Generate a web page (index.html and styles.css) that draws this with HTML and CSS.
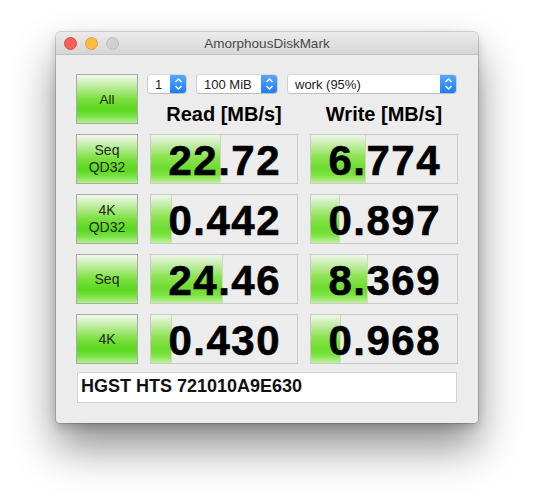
FILE: index.html
```
<!DOCTYPE html>
<html lang="en">
<head>
    <meta charset="UTF-8">
    <title>AmorphousDiskMark</title>
    <link rel="stylesheet" href="styles.css">
</head>
<body>
    <div class="window">
        <div class="titlebar">
            <div class="lights">
                <span class="light red"></span>
                <span class="light yellow"></span>
                <span class="light gray"></span>
            </div>
            <div class="title">AmorphousDiskMark</div>
        </div>
        <div class="contents">
            <div class="btn-test all">All</div>
            <div class="top">
                <div class="combos">
                    <div class="combo c-count"><span class="val">1</span><span class="arrows"><svg width="9" height="14" viewBox="0 0 9 14"><path d="M1.5 5 L4.5 2 L7.5 5 M1.5 9 L4.5 12 L7.5 9" fill="none" stroke="#fff" stroke-width="1.4"/></svg></span></div>
                    <div class="combo c-size"><span class="val">100 MiB</span><span class="arrows"><svg width="9" height="14" viewBox="0 0 9 14"><path d="M1.5 5 L4.5 2 L7.5 5 M1.5 9 L4.5 12 L7.5 9" fill="none" stroke="#fff" stroke-width="1.4"/></svg></span></div>
                    <div class="combo c-drive"><span class="val">work (95%)</span><span class="arrows"><svg width="9" height="14" viewBox="0 0 9 14"><path d="M1.5 5 L4.5 2 L7.5 5 M1.5 9 L4.5 12 L7.5 9" fill="none" stroke="#fff" stroke-width="1.4"/></svg></span></div>
                </div>
                <div class="heads">
                    <div class="head">Read [MB/s]</div>
                    <div class="head">Write [MB/s]</div>
                </div>
            </div>

            <div class="btn-test">Seq<br>QD32</div>
            <div class="result"><span class="bar" style="width:47%"></span><span class="num">22.72</span></div>
            <div class="result"><span class="bar" style="width:37%"></span><span class="num">6.774</span></div>

            <div class="btn-test">4K<br>QD32</div>
            <div class="result"><span class="bar" style="width:13.5%"></span><span class="num">0.442</span></div>
            <div class="result"><span class="bar" style="width:19.5%"></span><span class="num">0.897</span></div>

            <div class="btn-test">Seq</div>
            <div class="result"><span class="bar" style="width:48.5%"></span><span class="num">24.46</span></div>
            <div class="result"><span class="bar" style="width:38.5%"></span><span class="num">8.369</span></div>

            <div class="btn-test">4K</div>
            <div class="result"><span class="bar" style="width:13.5%"></span><span class="num">0.430</span></div>
            <div class="result"><span class="bar" style="width:20%"></span><span class="num">0.968</span></div>

            <div class="name">HGST HTS 721010A9E630</div>
        </div>
    </div>
</body>
</html>
```

FILE: styles.css
```
body{
    margin: 0;
    padding: 32px 0 81px 56px;
    background: #ffffff;
    font-family: "Liberation Sans", Arial, sans-serif;
}
.window{
    width: 422px;
    background: #ececec;
    border-radius: 5px 5px 4px 4px;
    box-shadow: 0 0 0 1px rgba(0,0,0,0.14), 0 4px 10px rgba(0,0,0,0.18), 0 24px 44px rgba(0,0,0,0.45);
    overflow: hidden;
}
.titlebar{
    height: 22px;
    border-bottom: 1px solid #c4c4c4;
    background: linear-gradient(#ebebeb, #d6d6d6);
    display: flex;
    align-items: center;
    position: relative;
}
.lights{
    display: flex;
    gap: 8px;
    padding-left: 8px;
}
.light{
    width: 11px;
    height: 11px;
    border-radius: 50%;
}
.red{ background: #fc605c; border: 0.5px solid #de4a45; }
.yellow{ background: #fdbc40; border: 0.5px solid #dea236; }
.gray{ background: #d0d0d0; border: 0.5px solid #bcbcbc; }
.title{
    position: absolute;
    left: 0;
    right: 0;
    text-align: center;
    font-size: 13.5px;
    color: #4a4a4a;
}
.contents{
    padding: 19px 20px 20px 20px;
    display: grid;
    grid-template-columns: 62px 148px 148px;
    grid-template-rows: repeat(5, 50px) 29px;
    column-gap: 12px;
    row-gap: 10px;
}
.btn-test{
    box-sizing: border-box;
    border: 1px solid #a9a9a9;
    background: linear-gradient(#f4f8f1 0%, #b9ec98 25%, #7de040 50%, #5ad91e 72%, #78e246 86%, #b2f28a 100%);
    display: flex;
    align-items: center;
    justify-content: center;
    text-align: center;
    font-size: 14px;
    line-height: 17px;
    color: #1d2a16;
}
.btn-test.all{
    font-size: 13.5px;
}
.top{
    grid-column: 2 / 4;
    display: flex;
    flex-direction: column;
}
.combos{
    display: flex;
    gap: 9px;
    margin-left: -3px;
    height: 20px;
}
.combo{
    box-sizing: border-box;
    height: 20px;
    background: #ffffff;
    border: 1px solid #cfcfcf;
    border-top-color: #d9d9d9;
    border-bottom-color: #bdbdbd;
    border-radius: 4px;
    display: flex;
    align-items: center;
    justify-content: space-between;
    font-size: 13px;
    color: #222;
    overflow: hidden;
}
.c-count{ width: 40px; }
.c-size{ width: 82px; }
.c-drive{ width: 170px; }
.val{
    padding-left: 7px;
}
.arrows{
    width: 17px;
    height: 20px;
    background: linear-gradient(#5aa9fc, #1a7bf4);
    display: flex;
    align-items: center;
    justify-content: center;
    margin-right: -1px;
}
.heads{
    display: flex;
    gap: 12px;
}
.head{
    width: 148px;
    text-align: center;
    font-size: 20px;
    font-weight: bold;
    line-height: 21px;
    padding-top: 10px;
    color: #000;
}
.result{
    position: relative;
    box-sizing: border-box;
    border: 1px solid #c9c9c9;
    background: #ededed;
    display: flex;
    align-items: center;
    justify-content: center;
    padding-top: 3px;
}
.bar{
    position: absolute;
    left: 0;
    top: 0;
    bottom: 0;
    background: linear-gradient(#eef7e8 0%, #c0eca4 22%, #8ee353 45%, #6edc30 70%, #7ce342 84%, #bff29c 100%);
    border-right: 1px solid #c8dcc0;
}
.num{
    position: relative;
    font-size: 42px;
    font-weight: bold;
    line-height: 42px;
    letter-spacing: 1.5px;
    padding-left: 1.5px;
    color: #000;
    -webkit-text-stroke: 0.6px #000;
}
.name{
    grid-column: 1 / 4;
    margin-top: -2px;
    margin-left: 1px;
    margin-right: 1px;
    box-sizing: border-box;
    background: #ffffff;
    border: 1px solid #d3d3d3;
    font-size: 18px;
    font-weight: bold;
    line-height: 27px;
    padding-left: 3px;
    color: #111;
}
```
